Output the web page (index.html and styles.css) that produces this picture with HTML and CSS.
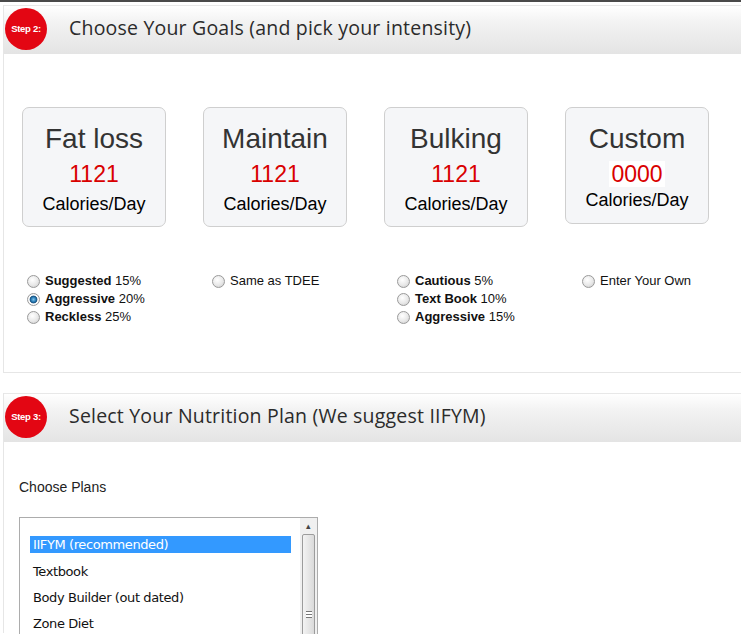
FILE: index.html
```html
<!DOCTYPE html>
<html>
<head>
<meta charset="utf-8">
<link rel="stylesheet" href="styles.css">
</head>
<body>
<div class="topline"></div>
<section class="step">
  <div class="step-head">
    <div class="badge">Step 2:</div>
    <h2 class="step-title">Choose Your Goals (and pick your intensity)</h2>
  </div>
  <div class="goals">
    <div class="card"><div class="card-name">Fat loss</div><div class="card-num">1121</div><div class="card-unit">Calories/Day</div></div>
    <div class="card"><div class="card-name">Maintain</div><div class="card-num">1121</div><div class="card-unit">Calories/Day</div></div>
    <div class="card"><div class="card-name">Bulking</div><div class="card-num">1121</div><div class="card-unit">Calories/Day</div></div>
    <div class="card card-custom"><div class="card-name">Custom</div><div class="card-num card-input">0000</div><div class="card-unit">Calories/Day</div></div>
  </div>
  <div class="options">
    <div class="opt-col">
      <label class="opt"><span class="radio"></span><b>Suggested</b>&nbsp;15%</label>
      <label class="opt"><span class="radio on"></span><b>Aggressive</b>&nbsp;20%</label>
      <label class="opt"><span class="radio"></span><b>Reckless</b>&nbsp;25%</label>
    </div>
    <div class="opt-col">
      <label class="opt"><span class="radio"></span>Same as TDEE</label>
    </div>
    <div class="opt-col">
      <label class="opt"><span class="radio"></span><b>Cautious</b>&nbsp;5%</label>
      <label class="opt"><span class="radio"></span><b>Text Book</b>&nbsp;10%</label>
      <label class="opt"><span class="radio"></span><b>Aggressive</b>&nbsp;15%</label>
    </div>
    <div class="opt-col">
      <label class="opt"><span class="radio"></span>Enter Your Own</label>
    </div>
  </div>
</section>
<section class="step step-open">
  <div class="step-head">
    <div class="badge">Step 3:</div>
    <h2 class="step-title">Select Your Nutrition Plan (We suggest IIFYM)</h2>
  </div>
  <div class="plans">
    <div class="plans-label">Choose Plans</div>
    <div class="listbox">
      <div class="list-items">
        <div class="item selected">IIFYM (recommended)</div>
        <div class="item">Textbook</div>
        <div class="item">Body Builder (out dated)</div>
        <div class="item">Zone Diet</div>
      </div>
      <div class="scrollbar">
        <div class="sb-arrow">&#9652;</div>
        <div class="sb-thumb"><span class="grip"></span></div>
      </div>
    </div>
  </div>
</section>
</body>
</html>
```
FILE: styles.css
```css
html, body {
  margin: 0;
  padding: 0;
  background: #fff;
  overflow: hidden;
}
body {
  font-family: "Liberation Sans", Arial, sans-serif;
  color: #000;
  width: 741px;
  height: 634px;
}
.topline {
  height: 2px;
  background: #4a4a4a;
  margin-bottom: 3px;
}
.step {
  margin-left: 3px;
  border-left: 1px solid #e6e6e6;
  border-bottom: 1px solid #e6e6e6;
  height: 367px;
}
.step-open {
  margin-top: 20px;
  border-bottom: none;
  height: 240px;
}
.step-head {
  height: 48px;
  border-top: 1px solid #e8e8e8;
  background: linear-gradient(#ffffff 0%, #f2f2f2 35%, #e4e4e4 100%);
  display: flex;
  align-items: center;
  position: relative;
}
.badge {
  width: 42px;
  height: 42px;
  border-radius: 50%;
  background: #e30613;
  color: #fff;
  font-size: 9.5px;
  font-weight: bold;
  display: flex;
  align-items: center;
  justify-content: center;
  margin: 0 0 3px 1px;
  letter-spacing: -0.3px;
}
.step-title {
  margin: 0 0 5px 22px;
  font-family: "Open Sans", sans-serif;
  font-weight: 400;
  font-size: 19.5px;
  color: #2b2b2b;
  letter-spacing: 0.2px;
}
.goals {
  display: flex;
  gap: 37px;
  padding: 53px 0 0 18px;
  align-items: flex-start;
}
.card {
  width: 142px;
  height: 118px;
  border: 1px solid #cfcfcf;
  border-radius: 7px;
  background: #f5f6f8;
  text-align: center;
  display: flex;
  flex-direction: column;
  align-items: center;
  flex: none;
  box-sizing: content-box;
}
.card-custom {
  height: 115px;
}
.card-name {
  font-size: 28px;
  color: #333;
  margin-top: 14px;
  line-height: 34px;
}
.card-num {
  font-size: 23px;
  color: #d90000;
  line-height: 26px;
  margin-top: 5px;
}
.card-input {
  background: #fff;
  padding: 0 2px;
}
.card-unit {
  font-size: 18px;
  line-height: 22px;
  margin-top: 6px;
}
.card-custom .card-unit {
  margin-top: 2px;
}
.options {
  display: flex;
  padding: 45px 0 0 23px;
}
.opt-col {
  width: 185px;
  flex: none;
  display: flex;
  flex-direction: column;
}
.opt {
  font-size: 13px;
  line-height: 18px;
  display: flex;
  align-items: center;
  color: #111;
}
.opt b {
  font-weight: bold;
}
.radio {
  width: 11px;
  height: 11px;
  border-radius: 50%;
  border: 1px solid #9a9a9a;
  background: radial-gradient(circle at 40% 35%, #ffffff 0%, #e8e8e8 55%, #c8c8c8 100%);
  margin-right: 5px;
  box-sizing: content-box;
  flex: none;
}
.radio.on {
  background: radial-gradient(circle, #7fc4ef 0%, #1c6fa8 35%, #1c4f7a 45%, #ffffff 55%, #e3e3e3 100%);
}
.plans {
  padding: 37px 0 0 15px;
}
.plans-label {
  font-size: 14px;
  color: #222;
  line-height: 16px;
}
.listbox {
  margin-top: 22px;
  width: 297px;
  height: 140px;
  border: 1px solid #acacac;
  display: flex;
}
.list-items {
  flex: 1;
  padding: 18px 0 0 10px;
  font-family: "DejaVu Sans", sans-serif;
  font-size: 13px;
  color: #111;
}
.item {
  height: 26px;
  line-height: 19px;
  padding-left: 3px;
  letter-spacing: -0.4px;
}
.item.selected {
  background: #3399ff;
  color: #fff;
  height: 17px;
  line-height: 17px;
  width: 258px;
  margin-bottom: 9px;
}
.scrollbar {
  width: 17px;
  background: #f0f0f0;
  display: flex;
  flex-direction: column;
  align-items: center;
}
.sb-arrow {
  font-size: 9px;
  color: #444;
  height: 16px;
  line-height: 16px;
}
.sb-thumb {
  width: 13px;
  flex: 1;
  border: 1px solid #9c9c9c;
  border-radius: 2px;
  background: linear-gradient(90deg, #f3f3f3, #dadada);
  display: flex;
  justify-content: center;
  padding-top: 76px;
  box-sizing: border-box;
}
.grip {
  width: 6px;
  height: 5px;
  border-top: 1px solid #777;
  border-bottom: 1px solid #777;
  background: linear-gradient(#fff 0 40%, #777 40% 60%, #fff 60%);
}
```
